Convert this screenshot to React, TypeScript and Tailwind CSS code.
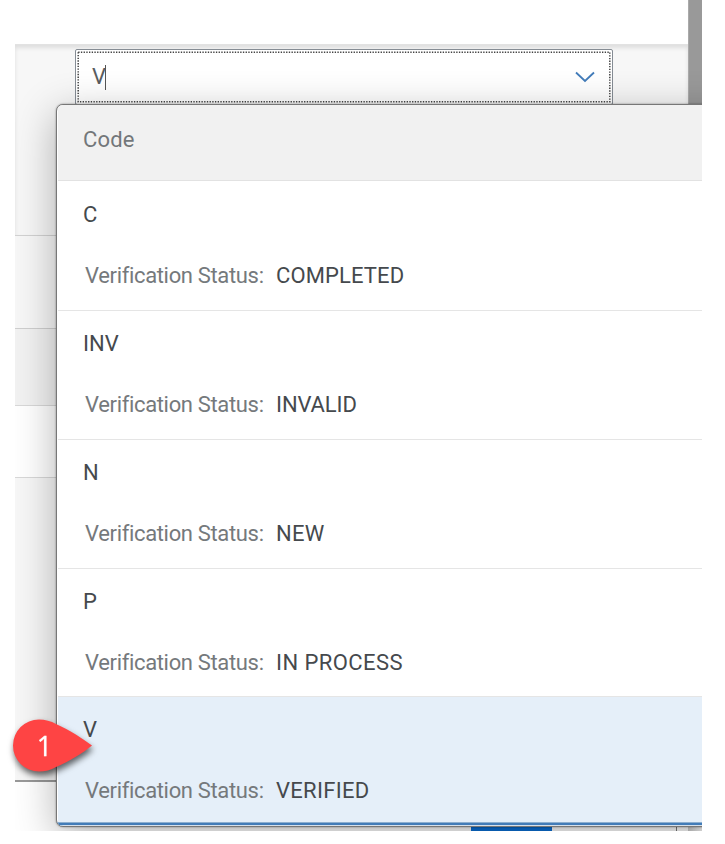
import React from "react";

const items = [
  { code: "C", status: "COMPLETED", tracking: "tracking-[0.12px]", row: "h-[130px] pt-[19px]" },
  { code: "INV", status: "INVALID", tracking: "tracking-[-0.1px]", row: "h-[129px] pt-[18px]" },
  { code: "N", status: "NEW", tracking: "tracking-[0.3px]", row: "h-[129px] pt-[18px]" },
  { code: "P", status: "IN PROCESS", tracking: "tracking-[0.43px]", row: "h-[128px] pt-[18px]" },
  { code: "V", status: "VERIFIED", tracking: "tracking-[0.3px]", row: "h-[129px] pt-[18px]" },
];

function ComboBox() {
  return (
    <div className="relative ml-[60px] mt-[4px] flex h-[56px] w-[538px] items-center justify-between rounded-[2px] border border-[#858c94] bg-white pl-[16px] pr-[16px]">
      <svg className="pointer-events-none absolute left-0 top-0" width="536" height="54" viewBox="0 0 536 54" fill="none">
        <rect x="2.2" y="2.2" width="531.6" height="49.6" stroke="#444" strokeWidth="1.5" strokeDasharray="1.35 1.35" />
      </svg>
      <div className="flex items-center">
        <span className="text-[22px] leading-[26px] text-[#5a5d60]">V</span>
        <span className="-ml-px h-[25px] w-px bg-[#555]" />
      </div>
      <svg width="22" height="14" viewBox="0 0 22 14" fill="none">
        <path d="M2 2.5 L11 11 L20 2.5" stroke="#427cba" strokeWidth="1.8" />
      </svg>
    </div>
  );
}

function Popup() {
  return (
    <div className="absolute left-[41px] top-[104px] flex h-[723px] w-[740px] flex-col overflow-hidden rounded-[7px] border border-[#777] bg-white pl-px shadow-[0_10px_42px_rgba(0,0,0,0.3),0_0_2px_rgba(0,0,0,0.45)]">
      <div className="flex h-[76px] shrink-0 items-center border-b border-[#e2e2e2] bg-[#f1f1f1] pb-[6px] pl-[25px] text-[22px] text-[#73777a]">
        <span className="tracking-[0.2px]">Code</span>
      </div>
      {items.map((item) => (
        <div
          key={item.code}
          className={`flex shrink-0 flex-col pl-[25px] ${item.row} ${
            item.code === "V" ? "bg-[#e5eff9]" : "border-b border-[#e5e5e5] bg-white"
          }`}
        >
          <div className="h-[61px] text-[22px] leading-[30px] text-[#45494d]">{item.code}</div>
          <div className="flex pl-[2px] text-[22px] leading-[30px]">
            <span className="w-[191px] whitespace-nowrap tracking-[-0.34px] text-[#75797c]">Verification Status:</span>
            <span className={`whitespace-nowrap text-[#45494d] ${item.tracking}`}>{item.status}</span>
          </div>
        </div>
      ))}
      <div className="absolute inset-x-0 bottom-0 h-[4px] border-b border-t border-b-[#d6e0eb] border-t-[#8dafd0] bg-[#427cb8]" />
    </div>
  );
}

function Pin() {
  return (
    <svg
      className="absolute left-[8px] top-[712px] drop-shadow-[1px_4px_3px_rgba(0,0,0,0.6)]"
      width="90"
      height="70"
      viewBox="8 712 90 70"
    >
      <path
        d="M92 745.5 C83 739 70 730 56 724 C51 721 45 719.5 39 719.5 A26 26 0 0 0 39 771.5 C45 771.5 51 770 56 767 C70 761 83 753 92 745.5Z"
        fill="#fe4444"
      />
      <text x="44.5" y="756" textAnchor="middle" fill="white" stroke="white" strokeWidth="0.3" fontFamily="Open Sans, Noto Sans, sans-serif" fontSize="27">1</text>
    </svg>
  );
}

export default function App() {
  return (
    <div className="relative h-[844px] w-[725px] overflow-hidden bg-white font-['Roboto',sans-serif]">
      <div className="relative ml-[15px] flex h-[831px] w-[687px] overflow-hidden bg-white">
        <div className="flex w-[673px] flex-col">
          <div className="h-[45px] shrink-0 border-b border-[#e2e2e2] bg-white" />
          <div className="h-[191px] shrink-0 border-b border-[#d2d2d2] bg-[#f7f7f7] shadow-[inset_0_3px_4px_rgba(0,0,0,0.1)]">
            <ComboBox />
          </div>
          <div className="h-[93px] shrink-0 border-b border-[#cfcfcf] bg-[#f7f7f7]" />
          <div className="h-[77px] shrink-0 border-b border-[#d8d8d8] bg-[#f2f2f2]" />
          <div className="h-[72px] shrink-0 border-b border-[#d8d8d8] bg-white" />
          <div className="h-[304px] shrink-0 border-b-2 border-[#999] bg-[#f7f7f7]" />
          <div className="flex h-[49px] shrink-0 items-end bg-white pl-[456px]">
            <div className="h-[20px] w-[81px] bg-[#0a6fd6]" />
            <div className="ml-[124px] h-[20px] w-px bg-[#777]" />
          </div>
        </div>
        <div className="flex w-[14px] flex-col justify-between bg-[#999] shadow-[inset_1px_0_0_#aaa]">
          <div />
          <div className="h-[20px] bg-gradient-to-r from-[#ccc] to-white" />
        </div>
        <Popup />
      </div>
      <Pin />
    </div>
  );
}
